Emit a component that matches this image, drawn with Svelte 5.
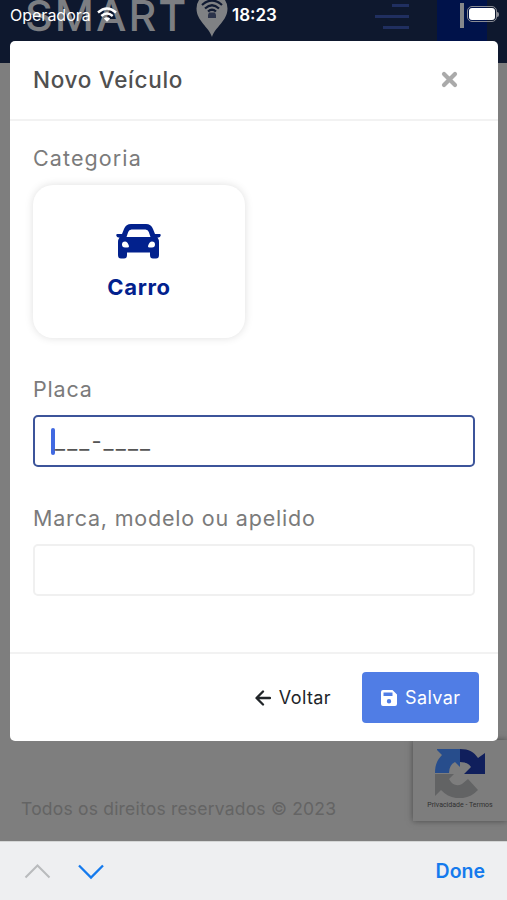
<script lang="ts">
  let plate = '___-____';
  let nickname = '';
</script>

<div class="screen">
  <div class="page">
    <header class="topbar">
      <div class="brand">
        <span class="brand-name">SMART</span>
        <svg class="pin" width="32" height="41" viewBox="0 0 32 41">
          <path d="M16 41C13 31 .5 25 .5 12.500A15.500 15.500 0 0 1 31.500 12.500C31.500 25 19 31 16 41Z" fill="#7f8184" />
          <g fill="none" stroke="#101a32" stroke-width="2.200">
            <path d="M6 9Q16 0 26 9" />
            <path d="M9 12.500Q16 6 23 12.500" />
            <path d="M12 15.500Q16 12 20 15.500" />
          </g>
          <path d="M13 16.500h6l1 2.500v3h-8v-3z" fill="#2b334a" />
        </svg>
      </div>
      <div class="menu">
        <span></span>
        <span></span>
        <span></span>
      </div>
      <div class="account"><span></span></div>
    </header>

    <footer class="footer">Todos os direitos reservados © 2023</footer>

    <div class="recaptcha">
      <svg width="50" height="50" viewBox="0 0 50 50">
        <path d="M0 25C0 16 3 11 7 7L2 2V1H25V19L20 14Q14 17 14 25Z" fill="#274d8c" />
        <path d="M25 1C34 1 39 4 43 10L50 5V26H29L36 19Q33 14 25 14Z" fill="#101f5c" />
        <path d="M0 26H19L14 31Q19 40 27 36L33 31L43 42C33 53 16 53 6 42L0 48Z" fill="#626364" />
      </svg>
      <span>Privacidade - Termos</span>
    </div>
  </div>

  <div class="statusbar">
    <span class="carrier">Operadora</span>
    <svg class="wifi" width="20" height="15" viewBox="0 0 20 15">
      <g fill="none" stroke="#fff" stroke-width="2.400">
        <path d="M1 5.500Q10 -2.500 19 5.500" />
        <path d="M4.300 9Q10 4 15.700 9" />
      </g>
      <path d="M6.800 11.500Q10 8.800 13.200 11.500L10 14.800Z" fill="#fff" />
    </svg>
    <span class="clock">18:23</span>
    <span class="battery"><i></i></span>
  </div>

  <div class="modal">
    <div class="modal-header">
      <h5>Novo Veículo</h5>
      <button class="close" type="button" aria-label="Fechar">
        <svg width="17" height="17" viewBox="0 0 17 17">
          <path d="M3 3L14 14M14 3L3 14" stroke="#aaa" stroke-width="4.200" stroke-linecap="round" />
        </svg>
      </button>
    </div>

    <div class="modal-body">
      <div class="label category-label">Categoria</div>
      <button class="category" type="button">
        <svg width="45" height="35" viewBox="0 0 45 35">
          <path
            fill-rule="evenodd"
            d="M15 0H30Q35 0 37 5L39 10H43.500Q45 10 44.700 11.500Q44.300 13.500 42.500 13.500H41.500Q43 15.500 43 18V31Q43 34.500 40 34.500H37Q34 34.500 34 31V28.500H11V31Q11 34.500 8 34.500H5Q2 34.500 2 31V18Q2 15.500 3.500 13.500H2.500Q.7 13.500 .3 11.500Q0 10 1.500 10H6L8 5Q10 0 15 0ZM15.500 5.500Q13 5.500 12.200 8L10.500 13H34.500L32.800 8Q32 5.500 29.500 5.500ZM9 17.500A3 3 0 0 0 9 23.500H11.500Q13.500 23.500 12.800 21.500Q11.500 17.500 9 17.500ZM36 17.500Q33.500 17.500 32.200 21.500Q31.500 23.500 33.500 23.500H36A3 3 0 0 0 36 17.500Z"
            fill="#02218d"
          />
        </svg>
        <span>Carro</span>
      </button>

      <div class="label">Placa</div>
      <div class="input focused">
        <span class="caret"></span>
        <span class="mask">{plate}</span>
      </div>

      <div class="label">Marca, modelo ou apelido</div>
      <div class="input">{nickname}</div>
    </div>

    <div class="modal-footer">
      <button class="btn" type="button">
        <svg width="16" height="16" viewBox="0 0 16 16">
          <path d="M8 1.500L1.500 8L8 14.500M2 8H15" fill="none" stroke="#212529" stroke-width="2.300" stroke-linecap="round" stroke-linejoin="round" />
        </svg>
        <span>Voltar</span>
      </button>
      <button class="btn primary" type="button">
        <svg width="16" height="16" viewBox="0 0 16 16">
          <path fill-rule="evenodd" d="M2 0H11.500L16 4.500V14Q16 16 14 16H2Q0 16 0 14V2Q0 0 2 0ZM2.500 2.500V6H11.500V2.500ZM8 9A2.200 2.200 0 1 0 8 13.400A2.200 2.200 0 1 0 8 9Z" fill="#fff" />
        </svg>
        <span>Salvar</span>
      </button>
    </div>
  </div>

  <div class="keyboard-bar">
    <svg width="80" height="18" viewBox="0 0 80 18" fill="none" stroke-width="2">
      <path d="M1.500 15.500L13.500 3.500L25.500 15.500" stroke="#b9bbbd" />
      <path d="M55 3.500L67 15.500L79 3.500" stroke="#147aed" stroke-width="2.300" />
    </svg>
    <button type="button">Done</button>
  </div>
</div>

<style>
  :global(body) {
    margin: 0;
  }

  .screen {
    position: relative;
    display: flex;
    flex-direction: column;
    width: 507px;
    height: 900px;
    overflow: hidden;
    font-family: Inter, 'Liberation Sans', sans-serif;
    box-sizing: border-box;
  }

  .screen :global(*) {
    box-sizing: border-box;
  }

  button {
    font-family: inherit;
    border: none;
    background: none;
    padding: 0;
  }

  .page {
    position: relative;
    flex: 1;
    display: flex;
    flex-direction: column;
    justify-content: space-between;
    background: #7e7e7e;
  }

  .topbar {
    display: flex;
    height: 63px;
    background: #0e182e;
    overflow: hidden;
  }

  .brand {
    display: flex;
    align-items: flex-start;
    width: 375px;
    padding-left: 25px;
  }

  .brand-name {
    width: 171px;
    margin-top: -6px;
    font-size: 43px;
    line-height: 43px;
    font-weight: 500;
    letter-spacing: 2px;
    color: #7c7e82;
  }

  .pin {
    margin-top: -4px;
  }

  .menu {
    display: flex;
    flex-direction: column;
    align-items: flex-end;
    gap: 8px;
    width: 34px;
    padding-top: 4px;
  }

  .menu span {
    width: 17px;
    height: 3px;
    background: #202f60;
  }

  .menu span:nth-child(2) {
    width: 34px;
  }

  .menu span:nth-child(3) {
    width: 26px;
  }

  .account {
    width: 50px;
    margin-left: 28px;
    padding: 3px 0 0 23px;
    background: #00124a;
  }

  .account span {
    display: block;
    width: 4px;
    height: 25px;
    background: #85878b;
  }

  .footer {
    padding: 0 0 20px 21px;
    font-size: 17.500px;
    line-height: 24px;
    letter-spacing: 0.2px;
    color: #646464;
  }

  .recaptcha {
    position: absolute;
    right: 0;
    bottom: 20px;
    width: 94px;
    height: 81px;
    padding: 8px 0 0;
    background: #7d7d7d;
    box-shadow: 0 0 6px #4a4a4a;
    display: flex;
    flex-direction: column;
    align-items: center;
  }

  .recaptcha span {
    margin-top: 3px;
    font-family: Roboto, sans-serif;
    font-size: 7px;
    line-height: 9px;
    white-space: nowrap;
    color: #303030;
  }

  .statusbar {
    position: absolute;
    top: 0;
    left: 0;
    right: 0;
    display: flex;
    align-items: center;
    height: 29px;
    padding: 0 8px 0 10px;
    color: #fff;
  }

  .carrier {
    width: 87px;
    font-size: 16px;
  }

  .clock {
    margin-left: 115px;
    font-size: 17px;
    font-weight: 600;
  }

  .battery {
    position: relative;
    width: 30px;
    height: 16px;
    margin: -2px 2px 0 auto;
    padding: 1px;
    border: 1px solid #8a8c94;
    border-radius: 5px;
  }

  .battery::after {
    content: '';
    position: absolute;
    right: -3px;
    top: 5px;
    width: 2px;
    height: 5px;
    border-radius: 0 2px 2px 0;
    background: #8a8c94;
  }

  .battery i {
    display: block;
    height: 100%;
    border-radius: 3px;
    background: #fff;
  }

  .modal {
    position: absolute;
    top: 41px;
    left: 10px;
    display: flex;
    flex-direction: column;
    width: 488px;
    height: 700px;
    border-radius: 5px;
    background: #fff;
  }

  .modal-header {
    display: flex;
    align-items: center;
    justify-content: space-between;
    height: 80px;
    padding: 0 40px 1px 23px;
    border-bottom: 2px solid #f2f2f2;
  }

  h5 {
    margin: 0;
    font-size: 22.500px;
    font-weight: 500;
    letter-spacing: 0.7px;
    color: #505050;
  }

  .close {
    display: flex;
  }

  .modal-body {
    flex: 1;
    padding: 22px 23px 0;
  }

  .label {
    font-size: 21.500px;
    line-height: 32px;
    letter-spacing: 0.8px;
    color: #7b7b7b;
  }

  .category-label {
    position: relative;
    top: -1px;
    letter-spacing: 1.1px;
  }

  .category {
    display: flex;
    flex-direction: column;
    align-items: center;
    width: 212px;
    height: 153px;
    margin: 10px 0 35px;
    padding-top: 39px;
    border-radius: 20px;
    background: #fff;
    box-shadow: 0 0 9px rgba(0, 0, 0, 0.13);
  }

  .category svg {
    margin-right: 1px;
  }

  .category span {
    margin-top: 14px;
    font-size: 22px;
    line-height: 28px;
    font-weight: 700;
    letter-spacing: 0.7px;
    color: #02218d;
  }

  .input {
    display: flex;
    align-items: center;
    height: 52px;
    margin: 10px 0 35px;
    padding: 0 16px;
    border: 2px solid #f0f0f0;
    border-radius: 5px;
    font-size: 22px;
    color: #555;
  }

  .focused {
    border-color: #3c549a;
  }

  .caret {
    width: 4px;
    height: 27px;
    border-radius: 2px;
    background: #4169e1;
  }

  .mask {
    letter-spacing: 2.1px;
  }

  .modal-footer {
    display: flex;
    align-items: center;
    justify-content: flex-end;
    gap: 31px;
    height: 89px;
    padding-right: 19px;
    border-top: 2px solid #f2f2f2;
  }

  .btn {
    display: flex;
    align-items: center;
    gap: 8px;
    height: 51px;
    font-size: 18px;
    letter-spacing: 0.4px;
    color: #212529;
  }

  .primary {
    width: 117px;
    padding-left: 19px;
    border-radius: 4px;
    background: #507de5;
    color: #fff;
  }

  .keyboard-bar {
    display: flex;
    align-items: center;
    justify-content: space-between;
    height: 59px;
    padding: 0 22px 0 24px;
    border-top: 1px solid #d4d6d6;
    background: #eeeff1;
  }

  .keyboard-bar button {
    font-size: 19.500px;
    font-weight: 600;
    color: #147aed;
  }
</style>
